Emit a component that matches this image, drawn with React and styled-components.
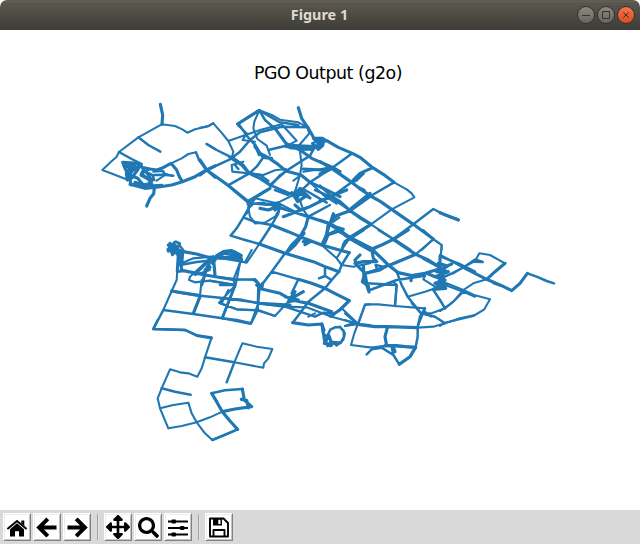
import React from 'react';
import styled, { createGlobalStyle } from 'styled-components';
import { FaSearch, FaArrowsAlt } from 'react-icons/fa';

const GlobalStyle = createGlobalStyle`
  * { box-sizing: border-box; }
  body { margin: 0; background: #fff; }
`;

const Window = styled.main`
  width: 640px;
  height: 544px;
  display: flex;
  flex-direction: column;
  overflow: hidden;
  background: #fff;
`;

const TitleBar = styled.header`
  height: 30px;
  flex: none;
  display: grid;
  grid-template-columns: 1fr auto 1fr;
  align-items: center;
  padding-right: 5px;
  border-radius: 7px 7px 0 0;
  background: linear-gradient(#55534a 0, #656358 1px, #59574d 3px, #3e3c38 30px);
`;

const WindowTitle = styled.h1`
  grid-column: 2;
  margin: 0 0 0 4px;
  color: #dfdbd2;
  font: bold 14.4px/20px 'Noto Sans', sans-serif;
`;

const Controls = styled.div`
  display: flex;
  justify-content: flex-end;
  gap: 2px;
`;

const ControlButton = styled.button`
  width: 18px;
  height: 18px;
  padding: 0;
  display: grid;
  place-items: center;
  border: 1px solid #33322e;
  border-radius: 50%;
  background: ${p => p.$close ? 'linear-gradient(#f5764e, #df4a1c)' : 'linear-gradient(#8a8981, #66655f)'};
  svg { display: block; width: 16px; height: 16px; stroke: #35332e; fill: none; }
`;

const Figure = styled.section`
  height: 480px;
  flex: none;
  display: flex;
  flex-direction: column;
`;

const PlotTitle = styled.h2`
  margin: 33px 0 0 16px;
  height: 20px;
  text-align: center;
  white-space: nowrap;
  color: #000;
  font: 400 17.4px/21px 'DejaVu Sans', sans-serif;
  letter-spacing: -0.45px;
`;

const Plot = styled.svg`
  display: block;
  width: 640px;
  height: 427px;
  fill: none;
  stroke: #1f77b4;
  stroke-linejoin: round;
  stroke-linecap: round;
`;

const Toolbar = styled.nav`
  height: 34px;
  flex: none;
  display: flex;
  align-items: center;
  gap: 2px;
  padding-left: 3px;
  background: #d9d9d9;
`;

const ToolButton = styled.button`
  width: 28px;
  height: 28px;
  padding: 0;
  display: grid;
  place-items: center;
  background: #fff;
  color: #000;
  border: 1px solid;
  border-color: #fff #828282 #828282 #fff;
  box-shadow: inset 1px 1px #ececec, inset -1px -1px #c3c3c3;
  svg { display: block; }
`;

const Separator = styled.i`
  width: 2px;
  height: 26px;
  margin: 0 3px 0 4px;
  border-left: 1px solid #a3a3a3;
  border-right: 1px solid #e2e2e2;
`;

/* Trajectory sections: an origin on the canvas and strokes in thirds of a pixel, by line weight. */
const sections = [
  { x: 95, y: 95,
    thin: 'M98 254L22 225L48 200L65 185L72 171L130 127L200 88L240 93L262 103L277 113L300 103L340 94L355 84M228 205L260 190L280 177L303 172M175 230L205 228L210 240L185 257M205 235L232 242M140 207Q110 220 105 245',
    mid: 'M130 127L160 150L196 170M72 171L110 192L140 207M303 172L312 195L335 225L360 248M335 147L360 162M178 240L205 239L235 242M160 225L140 235L157 250L178 255L172 240L150 230',
    bold: 'M196 28L203 60L201 88M140 217L165 222L185 225L200 220L228 205L245 225L253 245L262 260M105 268L150 280L190 276L230 270L262 260L300 245L335 225L360 213M83 202L130 205L140 214L118 220L100 240L90 220L84 204L110 224L130 222L105 255L108 270L126 266M94 215L120 210L96 229M94 235L97 255L103 240L128 250L145 270L167 265L178 280L176 296L165 310L155 333M145 225L138 240L160 252L171 268M153 230L171 257M120 262L150 274L200 271' },
  { x: 200, y: 95,
    thin: 'M0 98L22 94L40 85L62 110L85 138L100 170L96 185L130 210M178 46L163 80L160 100L172 132L200 152L210 180M85 138L130 122L180 105L245 88L290 137L270 148M178 46L215 60L240 74L295 82L322 97L328 115L298 150M95 210L97 230L148 235L190 240L225 226L258 222M95 210L130 200M300 170L305 210L300 240L285 290M210 276L240 240L258 228M145 320L145 350L135 360M148 325L200 330L240 320L280 300M115 92L140 115L128 135L165 140M303 240L280 257M330 262L370 300L410 326M310 230L398 217',
    mid: 'M20 147L50 165L90 185L130 210L148 235M20 225L90 193L120 170L150 135L180 112L245 95L325 97M84 271L148 235L170 215L190 187M113 87L145 66L178 46L195 75L230 105M178 46L240 82L295 90M375 135L345 155L330 182L258 228M210 270L280 300L300 290L330 262L398 217M205 165L258 152M210 270L258 228M118 90L145 128L165 150L177 180M105 210L115 222M148 235L180 240L205 258',
    bold: 'M0 195L20 225L84 271L145 320L210 280M20 225L0 240M165 150L180 175L205 188L230 205L258 228L303 240L330 262L370 280L420 305M225 100L258 145L300 165L335 190L398 217L420 230M258 150L340 155L320 163L270 158M295 38L305 70L325 100L345 135M90 187L125 210L148 235L180 250L210 270M340 130L368 130L373 140L345 139L365 148L345 157L338 145L355 163L368 152L371 132M258 154L300 160L335 163M310 222L365 225L390 218M280 300L293 320L315 305L300 280L325 305L285 290L305 282L290 312M113 87L178 46M165 155L190 187L215 190' },
  { x: 320, y: 120,
    thin: 'M222 187L260 208L275 220L283 232L215 268L153 313M153 313L220 357L160 388M340 357L365 375L365 390M340 357L305 390M40 280L35 300L58 285M18 345L60 325',
    mid: 'M97 100L35 145M222 187L152 228M35 230L95 187M280 313L340 267L375 285L415 298M280 313L220 357M0 300L40 315L90 352L70 372L65 390M0 197L35 230L0 242',
    bold: 'M0 55L20 62L55 82L97 100L120 112L158 143L190 163L222 187M0 125L35 145L95 187L118 205L152 228L182 245L215 268L280 313L340 357M35 230L60 245L90 272L125 297L153 313M220 357L270 390M158 143L120 160L105 175L95 187L110 180L130 160M152 228L90 272L40 290M153 313L90 352L160 388M5 150L30 149L0 162M115 202L133 211M0 242L25 234M40 282L25 325L10 375M45 320L70 328' },
  { x: 220, y: 190,
    thin: 'M82 35L100 42L85 55L90 80L105 100L135 98L165 80L180 55M105 25L180 42L225 65M82 42L130 38L170 50M118 162L80 218L0 198M0 262L45 267L100 270L120 285L115 340M0 325L60 328L115 340M0 340L50 358L115 360L165 378L200 340M115 340L92 402L5 385L45 285L40 270L65 205M365 355L415 402L435 345L450 343M335 380L415 402L450 405M365 225L400 230L450 220M388 145L365 180L350 205M305 165L350 205L365 225M265 380L285 370M240 30Q250 70 270 82M340 73L338 96L358 83M195 350L260 352L335 380',
    mid: 'M105 25L92 45L70 82L50 115L32 137L75 150L118 162M70 82L105 96L155 105M180 45L175 70L155 105M155 105L118 162M195 190L155 245L125 285M155 245L235 268M235 268L215 310M357 245L335 270L315 295L265 335L240 370L218 398M115 340L195 350L285 380L310 368L330 370M388 188L365 225L357 245M315 235L315 258L297 265M315 258L335 270M285 0L330 20L388 60L450 100M265 80L330 45M0 285L45 285M335 380L388 332M40 0L82 35L140 0M165 0L205 15M255 0L320 38M0 205L62 202M0 190L60 198M315 160L325 135L355 125L388 140',
    bold: 'M0 198L20 184L45 186L62 197M120 55L145 60L170 50L185 55M155 105L205 125L240 140L305 165L350 178L388 188M118 162L195 190L235 202L280 215L320 232L357 245M185 55L220 65L265 80L325 100L355 120L388 145L450 180M380 0L330 20L265 52L190 80M450 10L388 60M450 105L388 145M265 80L257 110L240 140L215 165L198 190L225 165L252 130M325 100L320 135L305 165M235 268L275 280L315 295L350 313L388 332L360 360L330 378M125 297L180 310L215 330L265 340L335 365M218 398L265 405L305 402L312 420M250 155L270 155L255 164M110 285L125 297L128 280M115 340L155 342L210 345M195 320L235 330L205 335L225 305L215 325L250 305M215 10L255 15L270 24L236 0L230 25L215 8M225 45L240 58M145 42L180 48L165 60M430 225L432 260L445 300' },
  { x: 145, y: 230,
    thin: 'M97 120L95 150L80 183M80 183L55 240M145 252L165 197L170 150M232 265L272 165L288 85L290 75M110 100L145 85L200 80L300 97L320 60M195 85L135 140L132 150L150 157L195 152L272 165M272 150L330 147L345 165M272 165L222 218L275 238L340 242L390 258M250 180L230 220M225 77L240 66L280 70L290 77M95 35L115 60L112 100M100 80L115 60M200 85L150 135L195 120',
    mid: 'M25 297L55 240M55 240L145 252L232 265L275 270L318 280L338 240L340 175M25 297L120 300L155 317L200 325M80 183L105 188L165 197L240 205L335 218L390 225M105 105L155 96L210 90M82 55L103 65L112 75M195 152L270 165L232 265M345 165L332 150M68 58L90 35L105 40L95 62L82 75L72 45L90 50L108 105',
    bold: 'M70 45L98 50L70 63L90 45L83 65L75 40M97 120L100 75L85 60L115 65L155 72L200 85L260 82L290 90M97 124L115 122L180 135L272 150M200 85L185 115L170 165M205 80L210 135M185 95L195 112L180 120M215 77L235 65L260 62L286 76M105 60L110 122M80 183L165 197M165 200L145 250M200 85L203 100L210 90' },
  { x: 345, y: 230,
    thin: 'M100 0L145 28M235 0L265 28L290 45L287 80M265 28L212 73M55 0L15 22M390 88L355 112L300 140M188 200L240 185L300 165L355 185L390 200M355 185L325 215L300 235L260 250L228 250L200 220M60 223L100 223L150 228L240 235L218 290M38 283L28 310L18 345L80 353M218 293L265 290L300 280L345 265L390 255M0 250L38 283L0 270M60 223L38 283M145 155L155 165L150 228M0 288L38 283M240 137L235 148L270 170M225 260L240 245L258 260',
    mid: 'M80 57L130 105L155 125L170 165L188 200L228 250L270 260L300 280M60 130L130 107L212 73M287 80L340 100L390 125M75 180L155 150L240 137M65 160L155 165M155 165L150 228M265 180L285 210L300 235M240 235L225 260L218 290L218 320L212 350L195 380L163 403L145 375L140 350M80 353L125 347L212 352M65 373L80 358L110 353L145 375M95 115L92 105L115 110L130 105',
    bold: 'M0 15L45 40L80 57L110 85L130 105L160 128L200 137L240 130L290 115L320 102M0 35L55 0M145 28L212 73L250 90L290 115M212 73L130 107M190 0L145 28L110 45L80 57M80 57L85 85L95 95L55 95L30 100M45 75L30 90L35 105L60 130M60 130L52 155L70 168L72 186M60 130L65 160M130 105L105 120L60 130M245 130L270 140M38 283L90 290L128 290L218 293M128 290L120 320L125 347M285 80L285 170M280 100L308 108L275 125L310 125L270 140L300 150L270 160L305 163L275 172L285 145L302 175L265 178L298 158L290 120L300 115M235 85L285 112M200 137L198 152M120 347L155 347L180 350L212 352M145 350L150 365M212 352L195 380L163 403' },
  { x: 440, y: 200,
    thin: 'M0 235L40 220L70 202L105 183L118 160L150 165L195 190M140 238L100 250L70 270L40 305L20 320L0 333M20 250L70 270L105 286L150 298L133 328L100 348L50 360L15 368L0 378',
    mid: 'M110 180L128 186L105 185M0 165L70 202M262 220L290 230L320 243L342 250',
    bold: 'M0 38L55 60M70 202L105 220L140 238L185 257L215 272L240 250L262 220M195 190L165 215L140 238M160 248L185 257' },
  { x: 145, y: 320,
    thin: 'M120 30L155 45L200 52L180 112L170 145L157 170L130 160L105 157L75 148L50 205L38 235L45 265L70 325L110 318L155 307L195 292L232 275M45 265L85 255L130 248L140 280L155 307M268 127L292 70L335 80L382 87L370 115L357 130L355 143L268 127M155 307L180 340L202 360L240 345L278 328',
    mid: 'M25 27L120 30M38 0L25 27M180 112L268 127L245 187M200 220L240 211L292 207M202 360L278 328M50 205L90 215L137 224',
    bold: 'M232 275L215 245L200 220M292 207L298 240L320 260L270 267L232 275L255 303L278 328M289 238L305 241L310 264' },
  { x: 315, y: 315,
    thin: 'M90 33L106 27L126 27M75 35L90 55L85 75L65 92L45 75',
    mid: 'M20 27L25 55L35 65M38 60L46 44L60 37L75 36L86 48L87 65L78 82L62 86L48 80L38 60',
    bold: 'M21 27L26 60L30 85L48 92L55 82L75 84M28 85L42 62L48 80L38 92L30 75' },
];

const HomeIcon = () => (
  <svg width="24" height="24" viewBox="0 0 24 24">
    <path d="M5 14.2L12 8.2L19 14.2V21.5H14V16.2H10V21.5H5Z" />
    <path d="M2.4 14L12 6L21.6 14" fill="none" stroke="#000" strokeWidth="2" />
    <path d="M16.3 5.5H19.3V11L16.3 8.5Z" />
  </svg>
);
const ArrowIcon = ({ forward }) => (
  <svg width="24" height="24" viewBox="0 0 24 24" fill="none" stroke="#000" strokeWidth="4">
    <path d={forward ? 'M2.5 12.5H20M11.2 3.8L19.9 12.5L11.2 21.2' : 'M21.5 12.5H4M12.8 3.8L4.1 12.5L12.8 21.2'} />
  </svg>
);
const SlidersIcon = () => (
  <svg width="24" height="24" viewBox="0 0 24 24">
    <path d="M2 6.5H22M2 13H22M2 19.5H22" stroke="#000" strokeWidth="1.8" />
    <rect x="5.5" y="4.6" width="4.5" height="3.8" rx="1" />
    <rect x="14" y="11.1" width="4.5" height="3.8" rx="1" />
    <rect x="5.5" y="17.6" width="4.5" height="3.8" rx="1" />
  </svg>
);
const SaveIcon = () => (
  <svg width="24" height="24" viewBox="0 0 24 24">
    <path d="M3 3.5H16.5L21 8V21.5H3ZM6.5 21V15H17.5V21" fill="none" stroke="#000" strokeWidth="1.9" strokeLinejoin="round" />
    <path d="M6 4H15V10.5H6Z" />
    <path d="M11.3 4.8H13.5V9H11.3Z" fill="#fff" />
  </svg>
);

export default function App() {
  return (
    <Window>
      <GlobalStyle />
      <TitleBar>
        <WindowTitle>Figure 1</WindowTitle>
        <Controls>
          <ControlButton aria-label="Minimize"><svg viewBox="0 0 16 16"><path d="M4 8.5H12" /></svg></ControlButton>
          <ControlButton aria-label="Maximize"><svg viewBox="0 0 16 16"><path d="M4.5 4.5H11.5V11.5H4.5Z" /></svg></ControlButton>
          <ControlButton $close aria-label="Close"><svg viewBox="0 0 16 16"><path d="M5.3 5.3L10.7 10.7M10.7 5.3L5.3 10.7" /></svg></ControlButton>
        </Controls>
      </TitleBar>
      <Figure>
        <PlotTitle>PGO Output (g2o)</PlotTitle>
        <Plot viewBox="0 83 640 427">
          {sections.map(s => (
            <g key={`${s.x}-${s.y}`} transform={`translate(${s.x} ${s.y}) scale(.33333)`}>
              <path d={s.thin} strokeWidth="6.3" />
              <path d={s.mid} strokeWidth="7.5" />
              <path d={s.bold} strokeWidth="9.5" />
            </g>
          ))}
        </Plot>
      </Figure>
      <Toolbar>
        <ToolButton aria-label="Home"><HomeIcon /></ToolButton>
        <ToolButton aria-label="Back"><ArrowIcon /></ToolButton>
        <ToolButton aria-label="Forward"><ArrowIcon forward /></ToolButton>
        <Separator />
        <ToolButton aria-label="Pan"><FaArrowsAlt size={24} /></ToolButton>
        <ToolButton aria-label="Zoom"><FaSearch size={21} /></ToolButton>
        <ToolButton aria-label="Subplots"><SlidersIcon /></ToolButton>
        <Separator />
        <ToolButton aria-label="Save"><SaveIcon /></ToolButton>
      </Toolbar>
    </Window>
  );
}
